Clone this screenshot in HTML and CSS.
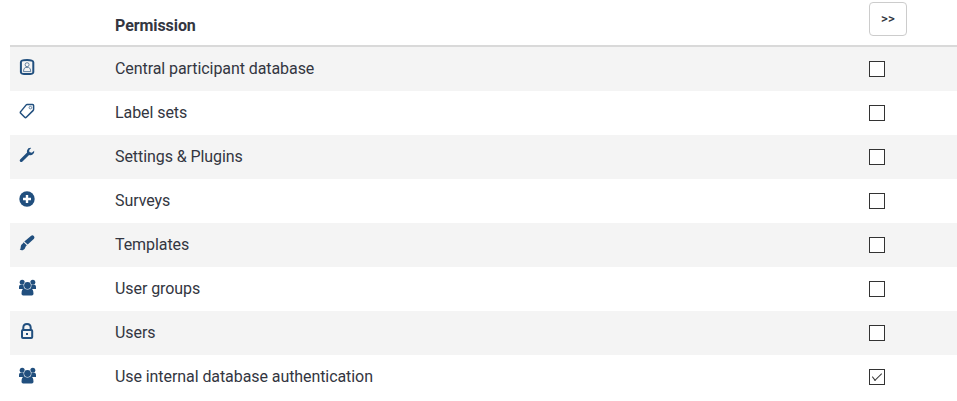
FILE: index.html
```html
<!DOCTYPE html>
<html lang="en">
<head>
<meta charset="utf-8">
<title>Permissions</title>
<link rel="stylesheet" href="styles.css">
</head>
<body>
<svg class="defs" width="0" height="0" aria-hidden="true">
  <symbol id="users" viewBox="0 0 18 18">
    <circle cx="4.2" cy="4.3" r="2.5"/><circle cx="14.8" cy="4.3" r="2.5"/>
    <path d="M1 11V8.8Q1 6.8 2.8 6.8H6.5V11ZM18 11V8.8Q18 6.8 16.2 6.8H12.5V11Z"/>
    <circle class="gap" cx="9.5" cy="7.5" r="3.9"/>
    <circle cx="9.5" cy="7.5" r="3.4"/>
    <path d="M3.5 15.7C3.5 12.3 4.6 10.8 6.3 10.6Q9.5 12.3 12.7 10.6C14.4 10.8 15.5 12.3 15.5 15.7Q15.5 17.4 13.8 17.4H5.2Q3.5 17.4 3.5 15.7Z"/>
  </symbol>
</svg>
<table class="permissions">
  <thead>
    <tr><th class="col-icon"></th><th class="col-name">Permission</th><th class="col-check"><button class="toggle" type="button">&gt;&gt;</button></th></tr>
  </thead>
  <tbody>
    <tr>
      <td><svg class="icon" viewBox="0 0 18 18"><path class="line" d="M2.9 4.2Q2.9 2.1 9.1 2.1T15.3 4.2V14.2Q15.3 16.1 9.1 16.1T2.9 14.2Z"/><g class="thin"><circle cx="9.1" cy="6.7" r="2"/><path d="M5.4 13.6Q5.4 9.8 7.9 9.3Q9.1 10 10.3 9.3Q12.8 9.8 12.8 13.6Z"/></g></svg></td>
      <td>Central participant database</td><td><input type="checkbox"></td>
    </tr>
    <tr>
      <td><svg class="icon" viewBox="0 0 18 18"><path class="medium" d="M9.1 2.5H14.5Q15.6 2.5 15.6 3.6V7.2Q15.6 8 15 8.6L8.3 15.2Q7.5 16 6.7 15.2L2.7 11.2Q1.9 10.4 2.7 9.6L8 3.1Q8.5 2.5 9.1 2.5Z"/><circle class="thin" cx="12.4" cy="5.6" r="1.3"/></svg></td>
      <td>Label sets</td><td><input type="checkbox"></td>
    </tr>
    <tr>
      <td><svg class="icon" viewBox="0 0 18 18"><path d="M13.2 1.9Q10 1.6 9.1 4.3Q8.7 5.5 9.1 6.6L2.1 13.4Q1.2 14.5 2.1 15.5T4.2 15.7L11.1 9Q13.2 9.7 14.9 8.2T16.2 4.7L13.8 6.8L11.4 6.1L11.2 4Z"/></svg></td>
      <td>Settings &amp; Plugins</td><td><input type="checkbox"></td>
    </tr>
    <tr>
      <td><svg class="icon" viewBox="0 0 18 18"><circle cx="9" cy="9" r="7.7"/><path class="plus" d="M9 5V13M5 9H13"/></svg></td>
      <td>Surveys</td><td><input type="checkbox"></td>
    </tr>
    <tr>
      <td><svg class="icon" viewBox="0 0 18 18"><path d="M13.2 1.7Q14.5 .8 15.8 2T16 4.7L9.7 10.6L6.3 7.5ZM5.6 8.3L8.8 11.2C8.4 12 7.8 12 7.4 13.2Q6.8 15.8 4.7 16.2Q3.2 16.6 1.7 15.5C3.3 15 2.1 11.1 4 10.2Q4.8 9.7 5.6 8.3Z"/></svg></td>
      <td>Templates</td><td><input type="checkbox"></td>
    </tr>
    <tr>
      <td><svg class="icon"><use href="#users"/></svg></td>
      <td>User groups</td><td><input type="checkbox"></td>
    </tr>
    <tr>
      <td><svg class="icon" viewBox="0 0 18 18"><path class="line" d="M5.3 8V5.7Q5.3 2 9 2T12.7 5.7V8"/><rect class="line" x="4" y="8" width="10.2" height="8.1" rx="1"/><rect x="8" y="11" width="2" height="2"/></svg></td>
      <td>Users</td><td><input type="checkbox"></td>
    </tr>
    <tr>
      <td><svg class="icon"><use href="#users"/></svg></td>
      <td>Use internal database authentication</td><td><input type="checkbox" checked></td>
    </tr>
  </tbody>
</table>
</body>
</html>
```
FILE: styles.css
```css
body {
  margin: 0;
  padding-left: 10px;
  background: #fff;
  color: #333641;
  font: 16px/24px Roboto, "Liberation Sans", sans-serif;
  letter-spacing: -.075px;
  overflow: hidden;
}
.defs { display: block; height: 0; }
.permissions {
  width: 947px;
  table-layout: fixed;
  border-spacing: 0;
}
th, td { box-sizing: border-box; text-align: left; }
th {
  height: 47px;
  padding: 6px 8px 0;
  border-bottom: 2px solid #d9d9d9;
  font-weight: 700;
}
.col-icon { width: 97px; }
.col-check { width: 96px; padding-top: 0; vertical-align: top; }
td { height: 44px; padding: 10px 8px; vertical-align: top; }
tbody tr:nth-child(odd) { background: #f4f4f4; }
.toggle {
  display: block;
  box-sizing: border-box;
  width: 38px;
  height: 34px;
  margin-top: 2px;
  padding: 0;
  border: 1px solid #ccc;
  border-radius: 4px;
  background: #fff;
  color: #333641;
  font: 500 13px/18px Roboto, sans-serif;
  letter-spacing: .2px;
}
.icon {
  display: block;
  width: 18px;
  height: 18px;
  margin-top: 1px;
  fill: #214f7e;
}
.line { fill: none; stroke: #214f7e; stroke-width: 2; }
.medium { fill: none; stroke: #214f7e; stroke-width: 1.5; }
.thin { fill: none; stroke: #557596; stroke-width: .9; }
.plus { stroke: #fff; stroke-width: 2.4; }
.gap { fill: #fff; }
input {
  appearance: none;
  display: block;
  box-sizing: border-box;
  width: 16px;
  height: 16px;
  margin: 4px 0 0;
  border: 1px solid #333;
  background: #fff;
}
input:checked::after {
  content: "";
  display: block;
  width: 10px;
  height: 5px;
  box-sizing: border-box;
  margin: 3px 0 0 2px;
  border: solid #333;
  border-width: 0 0 1.5px 1.5px;
  transform: rotate(-45deg) skewX(-8deg);
}
```
